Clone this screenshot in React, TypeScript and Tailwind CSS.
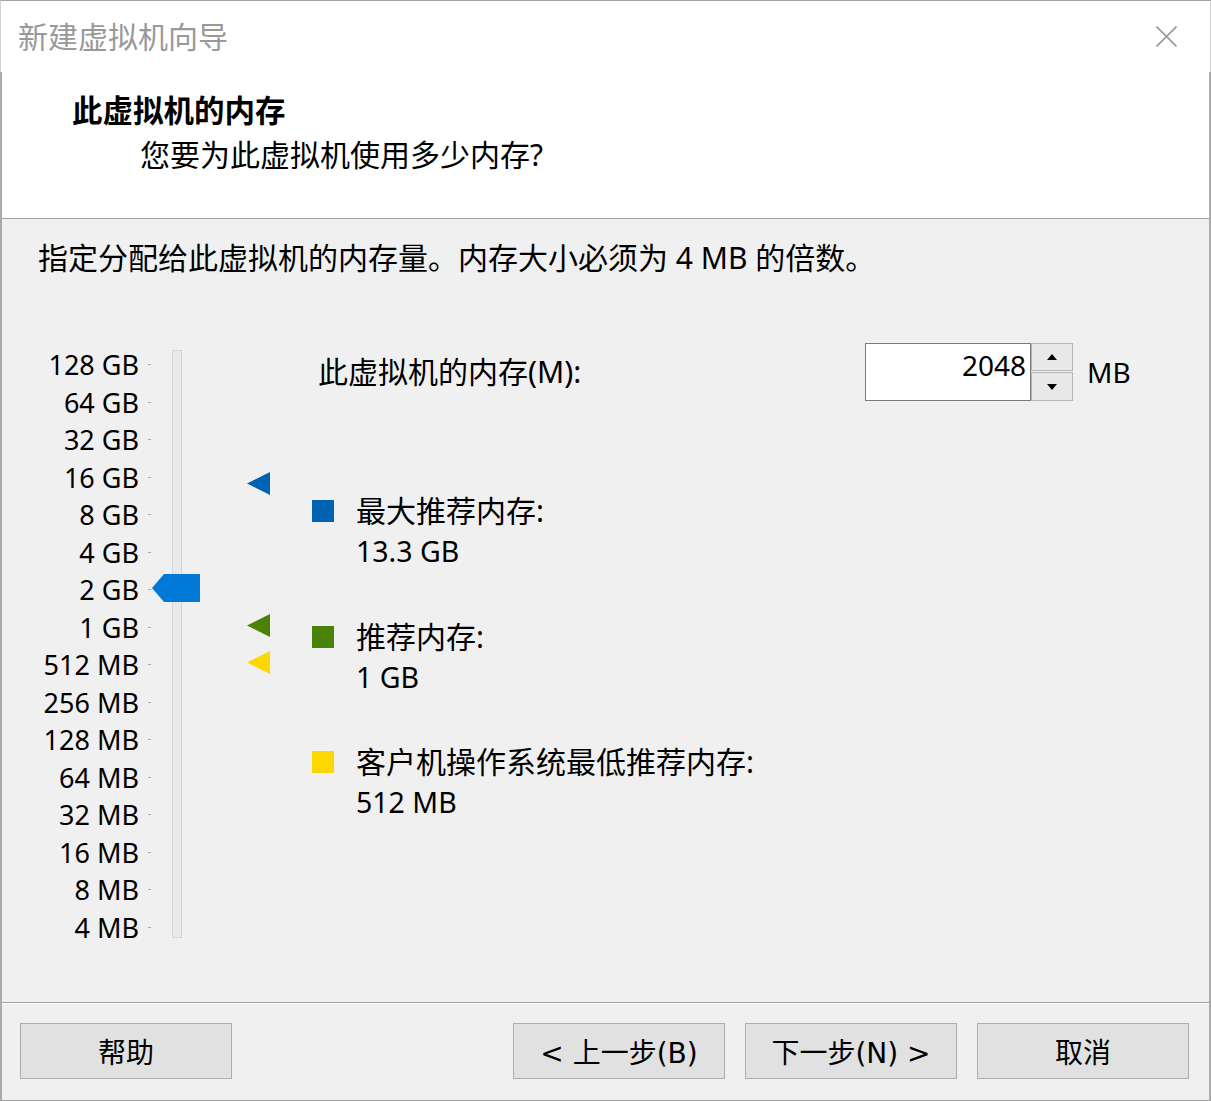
import React from "react";

const labels = [
  "128 GB",
  "64 GB",
  "32 GB",
  "16 GB",
  "8 GB",
  "4 GB",
  "2 GB",
  "1 GB",
  "512 MB",
  "256 MB",
  "128 MB",
  "64 MB",
  "32 MB",
  "16 MB",
  "8 MB",
  "4 MB",
];

function Marker({ color, top }: { color: string; top: string }) {
  return (
    <svg
      className={`absolute left-0 ${top}`}
      width="23"
      height="23"
      viewBox="0 0 23 23"
    >
      <polygon points="0,11.5 23,0 23,23" fill={color} />
    </svg>
  );
}

function Legend({
  sq,
  title,
  value,
  cls,
}: {
  sq: string;
  title: string;
  value: string;
  cls: string;
}) {
  return (
    <div className={`flex flex-row ${cls}`}>
      <div className={`w-[22px] h-[22px] mt-[9px] ${sq}`} />
      <div className="ml-[22px] flex flex-col">
        <div className="leading-[40px] text-[30px] text-black">{title}</div>
        <div className="leading-[40px] text-[28.5px] text-black">{value}</div>
      </div>
    </div>
  );
}

function Btn({ children, cls = "" }: { children: React.ReactNode; cls?: string }) {
  return (
    <div
      className={`w-[212px] h-[56px] bg-[#e1e1e1] border border-[#adadad] flex items-center justify-center pt-[5px] text-[28px] text-black font-['DejaVu_Sans','Noto_Sans_CJK_SC',sans-serif] ${cls}`}
    >
      {children}
    </div>
  );
}

export default function App() {
  return (
    <div className="w-[1211px] h-[1101px] bg-white flex flex-col overflow-hidden font-['Noto_Sans','Noto_Sans_CJK_SC',sans-serif] text-black">
      {/* Title bar */}
      <div className="h-[72px] shrink-0 border-t border-[#a0a0a0] border-x border-x-[#d0d0d0] flex items-center justify-between pl-[17px] pr-[33px]">
        <div className="text-[30px] text-[#999999] leading-[40px]">新建虚拟机向导</div>
        <svg width="21" height="21" viewBox="0 0 21 21">
          <line x1="0.5" y1="0.5" x2="20.5" y2="20.5" stroke="#999999" strokeWidth="1.6" />
          <line x1="20.5" y1="0.5" x2="0.5" y2="20.5" stroke="#999999" strokeWidth="1.6" />
        </svg>
      </div>

      <div className="flex-1 flex flex-col border-x-2 border-[#ababab] border-b border-b-[#a0a0a0]">
        {/* Header */}
        <div className="h-[147px] shrink-0 bg-white border-b border-[#a0a0a0] flex flex-col pt-[18px]">
          <div className="pl-[70px] leading-[40px] text-[30.5px] font-bold">此虚拟机的内存</div>
          <div className="pl-[138px] mt-[5px] leading-[40px] text-[30px]">您要为此虚拟机使用多少内存?</div>
        </div>

        {/* Body */}
        <div className="h-[784px] shrink-0 bg-[#f0f0f0] border-b border-[#a0a0a0] flex flex-col">
          <div className="mt-[19px] pl-[36px] leading-[40px] text-[30px] whitespace-nowrap">
            指定分配给此虚拟机的内存量。内存大小必须为 4 MB 的倍数。
          </div>

          <div className="mt-[65px] flex flex-row items-start">
            {/* Slider widget */}
            <div className="relative flex flex-row items-start w-[310px] shrink-0">
              <div className="pt-[3px] flex flex-col">
                {labels.map((l) => (
                  <div key={l} className="h-[37.5px] w-[149px] flex flex-row items-center justify-end">
                    <span className="text-[27px] leading-[37px] whitespace-nowrap">{l}</span>
                    <div className="ml-[9px] w-[3px] h-px bg-[#a8a8a8]" />
                  </div>
                ))}
              </div>
              <div className="ml-[21px] mt-[7px] w-[10px] h-[588px] bg-[#e7eaea] border border-[#d6d6d6]" />
              <svg
                className="absolute left-[150px] top-[231px]"
                width="48"
                height="28"
                viewBox="0 0 48 28"
              >
                <polygon points="0,14 12,0 48,0 48,28 12,28" fill="#0078d7" />
              </svg>
              <div className="ml-[65px] w-[23px] h-[600px] relative">
                <Marker color="#0063b1" top="top-[129px]" />
                <Marker color="#498205" top="top-[271px]" />
                <Marker color="#fcd800" top="top-[308px]" />
              </div>
            </div>

            {/* Right column */}
            <div className="flex flex-col">
              <div className="flex flex-row items-center h-[58px]">
                <div className="pl-[6px] w-[553px] text-[30px] leading-[40px] whitespace-nowrap">此虚拟机的内存(M):</div>
                <div className="w-[166px] h-[58px] bg-white border border-[#7a7a7a] text-right pr-[4px] pt-[1px] text-[28px] leading-[40px]">
                  2048
                </div>
                <div className="w-[42px] h-[58px] flex flex-col gap-[1px]">
                  <div className="h-[28px] bg-[#e8e8e8] border border-[#b4b4b4] flex items-center justify-center">
                    <svg width="10" height="6" viewBox="0 0 10 6">
                      <polygon points="5,0 10,6 0,6" fill="#000" />
                    </svg>
                  </div>
                  <div className="h-[29px] bg-[#e8e8e8] border border-[#b4b4b4] flex items-center justify-center">
                    <svg width="10" height="6" viewBox="0 0 10 6">
                      <polygon points="0,0 10,0 5,6" fill="#000" />
                    </svg>
                  </div>
                </div>
                <div className="ml-[14px] text-[28px] leading-[40px]">MB</div>
              </div>

              <Legend sq="bg-[#0063b1]" title="最大推荐内存:" value="13.3 GB" cls="mt-[90px]" />
              <Legend sq="bg-[#498205]" title="推荐内存:" value="1 GB" cls="mt-[46px]" />
              <Legend sq="bg-[#fcd800]" title="客户机操作系统最低推荐内存:" value="512 MB" cls="mt-[45px]" />
            </div>
          </div>
        </div>

        {/* Footer */}
        <div className="flex-1 bg-[#f0f0f0] border-t border-white flex flex-row items-start pt-[19px] pl-[18px] pr-[20px]">
          <Btn>帮助</Btn>
          <div className="ml-auto flex flex-row gap-[20px]">
            <Btn>&lt; 上一步(B)</Btn>
            <Btn>下一步(N) &gt;</Btn>
            <Btn>取消</Btn>
          </div>
        </div>
      </div>
    </div>
  );
}
